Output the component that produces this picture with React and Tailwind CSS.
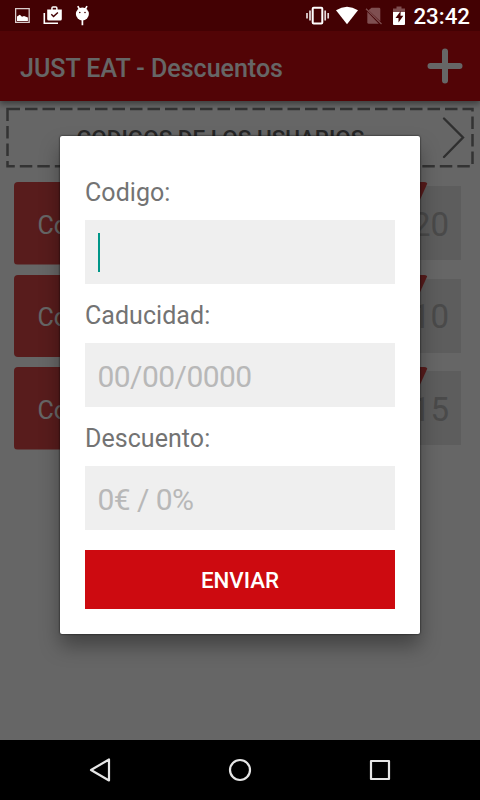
import React from "react";

const coupons = [
  { id: 1, label: "Codigo", discount: "20" },
  { id: 2, label: "Codigo", discount: "10" },
  { id: 3, label: "Codigo", discount: "15" },
];

const fields = [
  { name: "codigo", label: "Codigo:", placeholder: "", focused: true },
  { name: "caducidad", label: "Caducidad:", placeholder: "00/00/0000" },
  { name: "descuento", label: "Descuento:", placeholder: "0€ / 0%" },
];

function StatusBar() {
  return (
    <div className="relative z-20 flex h-[31px] items-center justify-between bg-[#430103] pl-[15px] pr-[10px] text-white">
      <div className="flex items-center">
        <svg className="h-[31px] w-[80px]" viewBox="15 0 80 31" fill="currentColor">
          {/* picture */}
          <path d="M15.600 8.600h13.600v13.800H15.600z" fill="none" stroke="#d9cccc" strokeWidth="1.300" />
          <path d="M17 21v-4.500l2.800-1.700 2.200 2 2-.8 3.900 1.500V21z" />
          {/* play store bag */}
          <path d="M44.300 13v10.200H58" fill="none" stroke="currentColor" strokeWidth="1.600" />
          <path
            fillRule="evenodd"
            d="M47.200 9.400h4V8q0-1.800 1.800-1.800h2.800q1.800 0 1.800 1.800v1.400h4.200v9.700q0 1.500-1.500 1.500H48.700q-1.500 0-1.500-1.500zM52.700 9.400h3.400V7.700h-3.400zM50.800 14.800l2.700 2.700 4.900-4.600-1-1-3.900 3.600-1.700-1.700z"
          />
          {/* android debug */}
          <circle cx="82.400" cy="14" r="6.500" />
          <path d="M77.800 6.200l2.200 4M87 6.200l-2.200 4M82.400 20v5.300" stroke="currentColor" strokeWidth="1.700" />
          <circle cx="79.800" cy="12.500" r=".8" fill="#430103" />
          <circle cx="85" cy="12.500" r=".8" fill="#430103" />
        </svg>
      </div>
      <div className="flex items-center gap-[7px]">
        <svg className="h-[31px] w-[101px]" viewBox="305 0 101 31" fill="currentColor">
          {/* vibrate */}
          <rect x="312.700" y="7.700" width="9.600" height="15.800" rx="1" fill="none" stroke="currentColor" strokeWidth="2" />
          <path d="M310 10.500v10M325.200 10.500v10M307 13v5.500M328.200 13v5.500" stroke="#e6dada" strokeWidth="1.700" />
          {/* wifi */}
          <path d="M336 10.300Q347 3 358 10.300L347 24.300z" />
          {/* no sim */}
          <g fill="#7f4f51">
            <path d="M371.500 7.700h7.500q1.300 0 1.300 1.300v12.300L368.500 10.200z" />
            <path d="M367.300 11.800l11.500 12h-10q-1.500 0-1.500-1.500z" />
            <path d="M366 8.800l15.500 15.200" stroke="#7f4f51" strokeWidth="1.200" />
          </g>
          {/* battery */}
          <path d="M396.500 6.500h5v2h3.500v5h-12v-5h3.500z" fill="#7f4f51" />
          <path d="M393 12h12v12q0 .9-.9.900h-10.200q-.9 0-.9-.9z" />
          <path d="M400.700 11l-5.200 7h3v4.500l4.800-6.700h-2.800z" fill="#430103" />
        </svg>
        <span className="pt-[2px] text-[22.300px] leading-[31px] font-medium">23:42</span>
      </div>
    </div>
  );
}

function AppBar() {
  return (
    <header className="relative z-[1] flex h-[70px] items-center justify-between bg-[#cd0a10] pl-5 pr-[17px] text-white shadow-[0_3px_6px_rgba(0,0,0,0.4)]">
      <h1 className="pt-[5px] text-[25px] font-medium whitespace-nowrap">JUST EAT - Descuentos</h1>
      <svg className="h-9 w-9" viewBox="0 0 36 36" stroke="currentColor" strokeWidth="6" strokeLinecap="round">
        <path d="M18 3.500v29M3.500 18h29" />
      </svg>
    </header>
  );
}

function UserCodesBanner() {
  return (
    <div className="grid h-[81px] w-[480px]">
      <svg className="col-start-1 row-start-1 h-[81px] w-[480px]" viewBox="0 101 480 81" fill="none">
        <path d="M7.500 109H472.500V166.300H7.500z" stroke="#808080" strokeWidth="2.500" strokeDasharray="12.500 5" />
        <path d="M444 118.500l19 19-19 19.500" stroke="#777" strokeWidth="2.400" strokeLinecap="round" />
      </svg>
      <p className="col-start-1 row-start-1 w-[441px] pt-[22px] text-center text-[22.500px] leading-[30px] font-medium whitespace-nowrap text-[#606060]">
        CODIGOS DE LOS USUARIOS
      </p>
    </div>
  );
}

function CouponRow({ coupon }) {
  return (
    <li className="grid h-[82.5px] grid-cols-[447px] pl-[14px]">
      <div className="col-start-1 row-start-1 mt-1 flex h-[74px] items-center justify-end bg-[#e8e8e8] pt-[3px] pr-[12px] text-[33px] text-[#b8b8b8]">
        {coupon.discount}
      </div>
      <div className="col-start-1 row-start-1 flex h-[82.5px] w-[414px] items-center rounded-[4px] bg-[#dc4646] pt-[4px] pl-[23.5px] text-[25px] text-white [clip-path:polygon(0_0,100%_0,91%_100%,0_100%)]">
        {coupon.label}
      </div>
    </li>
  );
}

function CodeDialog() {
  return (
    <div className="absolute top-[136px] left-[60px] z-30 h-[498px] w-[360px] rounded-[2px] bg-white px-[25px] pt-[28px] shadow-[0_0_2px_rgba(0,0,0,0.9),0_12px_20px_rgba(0,0,0,0.35)]">
      {fields.map((field) => (
        <label key={field.name} className="block h-[123px]">
          <span className="flex h-[56px] items-center pt-[2px] text-[25px] tracking-[0.05px] text-[#737373]">
            {field.label}
          </span>
          <span className="flex h-[64px] items-center bg-[#efefef] pt-[2px] pl-[12.5px] text-[30px] tracking-[-0.55px] text-[#b8b8b8]">
            {field.focused ? (
              <span className="-mt-[2px] h-[39px] w-[2px] bg-[#009688]" />
            ) : (
              field.placeholder
            )}
          </span>
        </label>
      ))}
      <button className="mt-[16.5px] block h-[59.5px] w-full bg-[#cd0a10] pt-[3px] text-[22.3px] font-medium text-white">
        ENVIAR
      </button>
    </div>
  );
}

function NavBar() {
  return (
    <nav className="relative z-20 flex h-[60px] items-center bg-black pl-[86px]">
      <svg className="h-[60px] w-[308px]" viewBox="86 740 308 60" fill="none" stroke="#e6e6e6" strokeWidth="2.200" strokeLinejoin="round">
        <path d="M109 759.500v21L91 770z" />
        <circle cx="240" cy="770" r="10" />
        <rect x="371" y="761" width="18" height="18" />
      </svg>
    </nav>
  );
}

export default function App() {
  return (
    <div className="relative flex h-[800px] w-[480px] flex-col overflow-hidden bg-white font-['Roboto',sans-serif]">
      <StatusBar />
      <AppBar />
      <main className="flex-1">
        <UserCodesBanner />
        <ul className="flex flex-col gap-[10px]">
          {coupons.map((coupon) => (
            <CouponRow key={coupon.id} coupon={coupon} />
          ))}
        </ul>
      </main>
      <NavBar />

      {/* Dimmed backdrop behind the dialog */}
      <div className="absolute inset-0 z-10 bg-black/60" />
      <CodeDialog />
    </div>
  );
}
